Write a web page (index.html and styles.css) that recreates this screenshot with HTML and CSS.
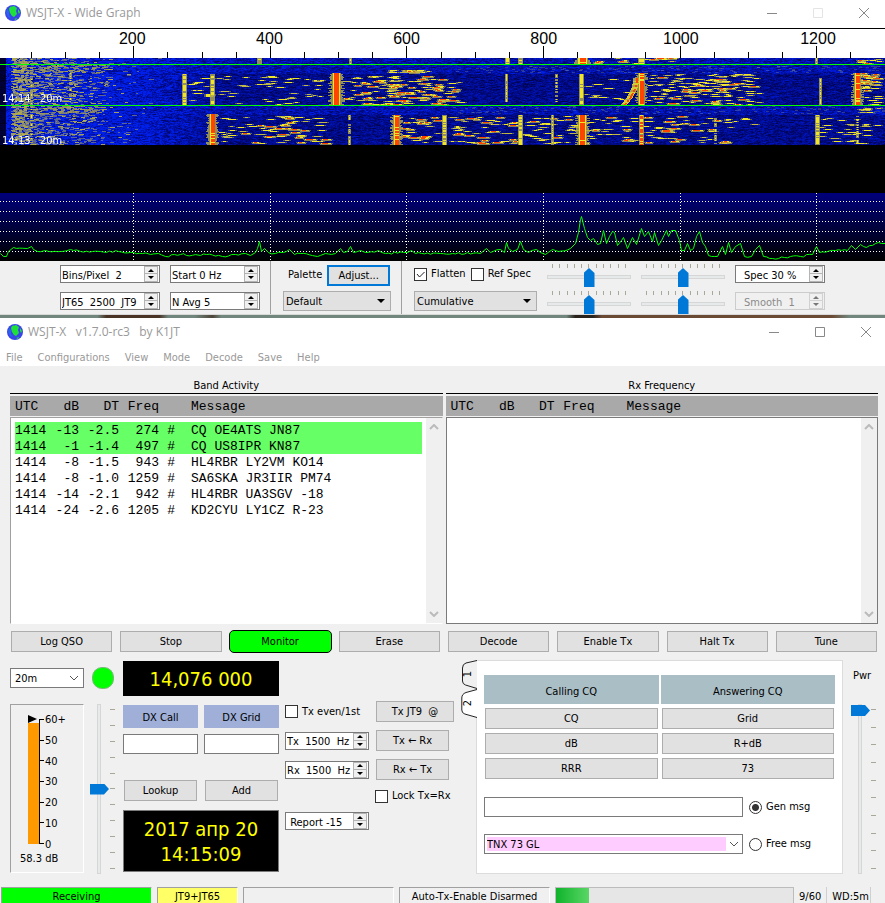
FILE: index.html
```html
<!DOCTYPE html>
<html lang="en">
<head>
  <meta charset="UTF-8">
  <meta name="viewport" content="width=device-width, initial-scale=1.0">
  <title>WSJT-X</title>
  <link rel="stylesheet" href="styles.css">
</head>
<body>

  <section class="wide-graph">
    <header class="titlebar">
      <svg class="globe" viewBox="0 0 16 16"><circle cx="8" cy="8" r="8" fill="#3a44e8"/><path d="M5 2l4-1 3 2-1 3 1 3-3 3-2-1-2-3-1-4zM13 4l2 3-1 2-1-2zM9 14l3-1-1 2z" fill="#1fe03a"/><path d="M2 4l2 2v4l2 3-3-1-2-4z" fill="#2b62f0"/></svg>
      <h1>WSJT-X - Wide Graph</h1>
      <div class="window-buttons">
        <button aria-label="Minimize"><svg viewBox="0 0 16 16"><path d="M3 8.500h10"/></svg></button>
        <button aria-label="Maximize" disabled><svg viewBox="0 0 16 16"><path d="M3.500 3.500h9v9h-9z"/></svg></button>
        <button aria-label="Close"><svg viewBox="0 0 16 16"><path d="M3 3l10 10M13 3L3 13"/></svg></button>
      </div>
    </header>

    <div class="scale">
      <div class="scale-labels">
        <span>200</span><span>400</span><span>600</span><span>800</span><span>1000</span><span>1200</span>
      </div>
      <canvas id="scale" height="12"></canvas>
    </div>

    <div class="waterfall">
      <canvas id="waterfall" height="135"></canvas>
      <span class="stamp stamp-new">14:14 &nbsp;&nbsp;20m</span>
      <span class="stamp stamp-old">14:13 &nbsp;&nbsp;20m</span>
    </div>
    <canvas id="spectrum" height="68"></canvas>

    <div class="graph-controls">
      <div class="group group-spins">
        <span class="spin"><input type="text" aria-label="Bins per pixel" value="Bins/Pixel  2"><button class="up" aria-label="Up"></button><button class="down" aria-label="Down"></button></span>
        <span class="spin"><input type="text" aria-label="Start frequency" value="Start 0 Hz"><button class="up" aria-label="Up"></button><button class="down" aria-label="Down"></button></span>
        <span class="spin"><input type="text" aria-label="JT65 JT9 split" value="JT65  2500  JT9"><button class="up" aria-label="Up"></button><button class="down" aria-label="Down"></button></span>
        <span class="spin"><input type="text" aria-label="Averages" value="N Avg 5"><button class="up" aria-label="Up"></button><button class="down" aria-label="Down"></button></span>
      </div>
      <div class="group group-palette">
        <div class="row palette-row">
          <label for="palette">Palette</label>
          <button class="btn focused">Adjust...</button>
        </div>
        <select id="palette" class="combo flat"><option>Default</option></select>
      </div>
      <div class="group group-view">
        <div class="row">
          <label class="check"><input type="checkbox" checked>Flatten</label>
          <label class="check"><input type="checkbox">Ref Spec</label>
        </div>
        <select class="combo flat" aria-label="Spectrum mode"><option>Cumulative</option></select>
      </div>
      <div class="group group-sliders">
        <div class="hslider"><div class="ticks" data-ticks="11"></div><input type="range" aria-label="Waterfall gain"></div>
        <div class="hslider"><div class="ticks" data-ticks="11"></div><input type="range" aria-label="Spectrum gain"></div>
        <div class="hslider"><div class="ticks" data-ticks="11"></div><input type="range" aria-label="Waterfall zero"></div>
        <div class="hslider"><div class="ticks" data-ticks="11"></div><input type="range" aria-label="Spectrum zero"></div>
      </div>
      <div class="group group-spec">
        <span class="spin inset"><input type="text" aria-label="Spectrum height" value="Spec 30 %"><button class="up" aria-label="Up"></button><button class="down" aria-label="Down"></button></span>
        <span class="spin inset disabled"><input type="text" aria-label="Smoothing" value="Smooth  1" disabled><button class="up" aria-label="Up" disabled></button><button class="down" aria-label="Down" disabled></button></span>
      </div>
    </div>
  </section>

  <div class="desktop-strip"></div>

  <section class="main-window">
    <header class="titlebar">
      <svg class="globe" viewBox="0 0 16 16"><circle cx="8" cy="8" r="8" fill="#3a44e8"/><path d="M5 2l4-1 3 2-1 3 1 3-3 3-2-1-2-3-1-4zM13 4l2 3-1 2-1-2zM9 14l3-1-1 2z" fill="#1fe03a"/><path d="M2 4l2 2v4l2 3-3-1-2-4z" fill="#2b62f0"/></svg>
      <h1>WSJT-X &nbsp; v1.7.0-rc3 &nbsp; by K1JT</h1>
      <div class="window-buttons">
        <button aria-label="Minimize"><svg viewBox="0 0 16 16"><path d="M3 8.500h10"/></svg></button>
        <button aria-label="Maximize"><svg viewBox="0 0 16 16"><path d="M3.500 3.500h9v9h-9z"/></svg></button>
        <button aria-label="Close"><svg viewBox="0 0 16 16"><path d="M3 3l10 10M13 3L3 13"/></svg></button>
      </div>
    </header>
    <nav class="menu">
      <button>File</button><button>Configurations</button><button>View</button><button>Mode</button><button>Decode</button><button>Save</button><button>Help</button>
    </nav>

    <main>
      <div class="panels">
        <div class="panel">
          <h2>Band Activity</h2>
          <table>
            <thead>
              <tr><th>UTC</th><th>dB</th><th>DT</th><th>Freq</th><th></th><th>Message</th></tr>
            </thead>
            <tbody>
              <tr class="cq"><td>1414</td><td>-13</td><td>-2.5</td><td>274</td><td>#</td><td>CQ OE4ATS JN87</td></tr>
              <tr class="cq"><td>1414</td><td>-1</td><td>-1.4</td><td>497</td><td>#</td><td>CQ US8IPR KN87</td></tr>
              <tr><td>1414</td><td>-8</td><td>-1.5</td><td>943</td><td>#</td><td>HL4RBR LY2VM KO14</td></tr>
              <tr><td>1414</td><td>-8</td><td>-1.0</td><td>1259</td><td>#</td><td>SA6SKA JR3IIR PM74</td></tr>
              <tr><td>1414</td><td>-14</td><td>-2.1</td><td>942</td><td>#</td><td>HL4RBR UA3SGV -18</td></tr>
              <tr><td>1414</td><td>-24</td><td>-2.6</td><td>1205</td><td>#</td><td>KD2CYU LY1CZ R-23</td></tr>
            </tbody>
          </table>
          <div class="scrollbar">
            <svg viewBox="0 0 10 6"><path d="M1 5l4-4 4 4"/></svg>
            <svg viewBox="0 0 10 6"><path d="M1 1l4 4 4-4"/></svg>
          </div>
        </div>
        <div class="panel panel-active">
          <h2>Rx Frequency</h2>
          <table>
            <thead>
              <tr><th>UTC</th><th>dB</th><th>DT</th><th>Freq</th><th></th><th>Message</th></tr>
            </thead>
            <tbody></tbody>
          </table>
          <div class="scrollbar">
            <svg viewBox="0 0 10 6"><path d="M1 5l4-4 4 4"/></svg>
            <svg viewBox="0 0 10 6"><path d="M1 1l4 4 4-4"/></svg>
          </div>
        </div>
      </div>

      <div class="actions">
        <button class="btn">Log QSO</button>
        <button class="btn">Stop</button>
        <button class="btn monitor">Monitor</button>
        <button class="btn">Erase</button>
        <button class="btn">Decode</button>
        <button class="btn">Enable Tx</button>
        <button class="btn">Halt Tx</button>
        <button class="btn">Tune</button>
      </div>

      <div class="station">
        <div class="col-band">
          <select class="combo" aria-label="Band"><option>20m</option></select>
          <div class="meter">
            <div class="meter-body">
              <div class="meter-bar"><div class="meter-fill" style="height: 97%"></div></div>
              <div class="meter-ticks ticks" data-ticks="7"></div>
              <div class="meter-labels">
                <span>60+</span><span>50</span><span>40</span><span>30</span><span>20</span><span>10</span><span>0</span>
              </div>
            </div>
            <div class="meter-value">58.3 dB</div>
          </div>
        </div>

        <div class="col-gain">
          <div class="lamp"></div>
          <div class="vslider"><input type="range" aria-label="Input gain" value="50"><div class="ticks" data-ticks="11"></div></div>
        </div>

        <div class="col-dx">
          <div class="readout frequency">14,076 000</div>
          <div class="pair">
            <label class="dx-label" for="dxcall">DX Call</label>
            <label class="dx-label" for="dxgrid">DX Grid</label>
          </div>
          <div class="pair">
            <input type="text" id="dxcall">
            <input type="text" id="dxgrid">
          </div>
          <div class="pair dx-buttons">
            <button class="btn">Lookup</button>
            <button class="btn">Add</button>
          </div>
          <div class="readout clock">2017 апр 20<br>14:15:09</div>
        </div>

        <div class="col-tx">
          <label class="check"><input type="checkbox">Tx even/1st</label>
          <button class="btn">Tx JT9 &nbsp;@</button>
          <span class="spin"><input type="text" aria-label="Tx frequency" value="Tx  1500  Hz"><button class="up" aria-label="Up"></button><button class="down" aria-label="Down"></button></span>
          <button class="btn narrow">Tx ← Rx</button>
          <span class="spin"><input type="text" aria-label="Rx frequency" value="Rx  1500  Hz"><button class="up" aria-label="Up"></button><button class="down" aria-label="Down"></button></span>
          <button class="btn narrow">Rx ← Tx</button>
          <label class="check lock"><input type="checkbox">Lock Tx=Rx</label>
          <span class="spin"><input type="text" aria-label="Report" value=" Report -15"><button class="up" aria-label="Up"></button><button class="down" aria-label="Down"></button></span>
        </div>

        <div class="col-messages">
          <div class="tabs">
            <button><svg viewBox="0 0 16 29"><path d="M16 .5L5 3Q1.500 4 1.500 8v13q0 3 3 4l11.500 3.500"/></svg><span>1</span></button>
            <button class="selected"><svg viewBox="0 0 16 29"><path d="M16 .5L5 3.500Q.8 5 .8 9v12q0 3 3 4L16 28.500"/></svg><span>2</span></button>
          </div>
          <div class="tab-page">
            <div class="message-grid">
              <div class="grid-head">Calling CQ</div><div class="grid-head">Answering CQ</div>
              <button class="btn">CQ</button><button class="btn">Grid</button>
              <button class="btn">dB</button><button class="btn">R+dB</button>
              <button class="btn">RRR</button><button class="btn">73</button>
            </div>
            <div class="message-row">
              <input type="text" aria-label="Generated message">
              <label class="check"><input type="radio" name="msg" checked>Gen msg</label>
            </div>
            <div class="message-row">
              <select class="combo pink" aria-label="Free message"><option>TNX 73 GL</option></select>
              <label class="check"><input type="radio" name="msg">Free msg</label>
            </div>
          </div>
        </div>

        <div class="col-power">
          <label for="pwr">Pwr</label>
          <div class="vslider"><input type="range" id="pwr" value="100"><div class="ticks" data-ticks="10"></div></div>
        </div>
      </div>
    </main>

    <footer class="status">
      <div class="cell receiving">Receiving</div>
      <div class="cell mode">JT9+JT65</div>
      <div class="cell"></div>
      <div class="cell">Auto-Tx-Enable Disarmed</div>
      <div class="progress"><div class="progress-fill" style="width: 14%"></div></div>
      <div class="plain">9/60</div>
      <div class="plain">WD:5m</div>
    </footer>
  </section>

  <script src="script.js"></script>
</body>
</html>
```
FILE: styles.css
```css
* {
  box-sizing: border-box;
}

body {
  margin: 0;
  font-family: "DejaVu Sans Condensed", "Noto Sans", sans-serif;
  font-size: 11px;
  line-height: 14px;
  color: #000;
  background-color: #f0f0f0;
}

button, input, select {
  font: inherit;
  color: inherit;
  margin: 0;
  padding: 0;
  border: none;
  border-radius: 0;
  background: none;
  appearance: none;
  outline: none;
}

canvas {
  display: block;
  width: 100%;
}

/* title bars */
.titlebar {
  display: flex;
  align-items: center;
  height: 28px;
  padding: 0 13px 3px 5px;
  background-color: #fff;
}

.titlebar h1 {
  flex: 1;
  margin: 0 0 0 5px;
  font-family: "Open Sans", sans-serif;
  font-size: 12px;
  font-weight: normal;
  color: #999;
}

.globe {
  width: 16px;
  height: 16px;
}

.window-buttons {
  display: flex;
  gap: 30px;
}

.window-buttons button {
  width: 16px;
  height: 16px;
}

.window-buttons svg {
  display: block;
  fill: none;
  stroke: #888;
}

.window-buttons button:disabled svg {
  stroke: #e4e4e4;
}

/* wide graph */
.scale {
  height: 30px;
  border-top: 1px solid #000;
  background-color: #fff;
}

.scale-labels {
  display: flex;
  height: 17px;
  padding-left: 7.2%;
  font-family: "Liberation Sans", Arial, sans-serif;
  font-size: 16px;
  line-height: 19px;
}

.scale-labels span {
  width: 16.7%;
  flex: none;
  text-align: center;
}

.waterfall {
  position: relative;
  background-color: #000;
}

.stamp {
  position: absolute;
  left: 2px;
  font-size: 11px;
  line-height: 12px;
  color: #fff;
  white-space: pre;
}

.stamp-new {
  top: 35px;
}

.stamp-old {
  top: 77px;
}

.graph-controls {
  display: flex;
  height: 54px;
  border-bottom: 1px solid #d8d8d8;
}

.group {
  display: grid;
  grid-template-rows: 20px 20px;
  row-gap: 7px;
  padding: 3px 10px 0;
  align-items: center;
}

.group-spins {
  grid-template-columns: 100px 90px;
  column-gap: 10px;
  padding-left: 60px;
  border-right: 1px solid #a0a0a0;
}

.group-palette {
  width: 131px;
  padding-left: 12px;
  border-right: 1px solid #a0a0a0;
}

.group-view {
  width: 145px;
  padding: 3px 10px 0 12px;
}

.group-sliders {
  grid-template-columns: 84px 84px;
  column-gap: 10px;
  padding: 3px 0 0;
  align-items: start;
}

.group-spec {
  grid-template-columns: 90px;
}

.row {
  display: flex;
  align-items: center;
  gap: 5px;
}

.palette-row {
  padding: 2px 1px 0 5px;
  justify-content: space-between;
}

.palette-row .btn {
  width: 63px;
}

/* basic controls */
.btn {
  height: 21px;
  padding-top: 1px;
  line-height: 18px;
  text-align: center;
  white-space: nowrap;
  background-color: #e1e1e1;
  border: 1px solid #adadad;
}

.btn.focused {
  padding-top: 0;
  border: 2px solid #0078d7;
}

input[type="text"] {
  min-width: 0;
  height: 20px;
  border: 1px solid #7a7a7a;
  background-color: #fff;
}

.spin {
  display: grid;
  grid-template-columns: 1fr 14px;
  grid-template-rows: 8px 8px;
  height: 18px;
  padding: 0 1px;
  border: 1px solid #7a7a7a;
  background-color: #fff;
}

.spin input[type="text"] {
  grid-row: 1 / 3;
  height: 16px;
  padding-top: 2px;
  border: none;
  white-space: pre;
}

.spin.inset input {
  padding-left: 7px;
}

.spin button {
  border: 1px solid #b4b4b4;
  background: #f0f0f0 url("data:image/svg+xml,%3Csvg xmlns='http://www.w3.org/2000/svg' width='6' height='3'%3E%3Cpath d='M0 3l3-3 3 3z'/%3E%3C/svg%3E") center no-repeat;
}

.spin .down {
  border-top: none;
  background-image: url("data:image/svg+xml,%3Csvg xmlns='http://www.w3.org/2000/svg' width='6' height='3'%3E%3Cpath d='M0 0l3 3 3-3z'/%3E%3C/svg%3E");
}

.spin.disabled {
  border-color: #ccc;
  background-color: #f0f0f0;
  color: #8a8a8a;
}

.spin.disabled input {
  background-color: #f0f0f0;
}

.spin.disabled button {
  opacity: 0.5;
}

.combo {
  width: 100%;
  height: 20px;
  padding: 1px 4px 0;
  border: 1px solid #7a7a7a;
  background: #fff url("data:image/svg+xml,%3Csvg xmlns='http://www.w3.org/2000/svg' width='10' height='6'%3E%3Cpath d='M1 1l4 4 4-4' fill='none' stroke='%23555'/%3E%3C/svg%3E") right 4px center no-repeat;
}

.combo.flat {
  padding: 1px 2px 0;
  border-color: #adadad;
  background: #e1e1e1 url("data:image/svg+xml,%3Csvg xmlns='http://www.w3.org/2000/svg' width='8' height='4'%3E%3Cpath d='M0 0l4 4 4-4z'/%3E%3C/svg%3E") right 5px center no-repeat;
}

.check {
  display: flex;
  align-items: center;
  gap: 4px;
  line-height: 16px;
  white-space: nowrap;
}

.check input {
  flex: none;
  width: 13px;
  height: 13px;
  border: 1px solid #333;
  background-color: #fff;
}

.check input[type="checkbox"]:checked {
  background-image: url("data:image/svg+xml,%3Csvg xmlns='http://www.w3.org/2000/svg' width='11' height='11'%3E%3Cpath d='M2 5l2.500 3L9.500 3' fill='none' stroke='%23222'/%3E%3C/svg%3E");
}

.check input[type="radio"] {
  border-radius: 50%;
}

.check input[type="radio"]:checked {
  background-image: radial-gradient(circle, #333 0 3px, #fff 4px);
}

/* sliders */
.ticks {
  display: flex;
  justify-content: space-between;
}

.hslider .ticks {
  height: 4px;
  padding: 0 5px;
}

.hslider .ticks i {
  width: 1px;
  background-color: #a9a797;
}

.hslider input {
  display: block;
  width: 100%;
  height: 18px;
}

input[type="range"]::-webkit-slider-runnable-track {
  height: 4px;
  border: 1px solid #d6d6d6;
  background-color: #e7eaea;
}

input[type="range"]::-webkit-slider-thumb {
  appearance: none;
  width: 11px;
  height: 19px;
  margin-top: -8px;
  background-color: #0078d7;
  clip-path: polygon(50% 0, 100% 5px, 100% 100%, 0 100%, 0 5px);
}

.vslider {
  display: flex;
  height: 170px;
}

.vslider input {
  flex: none;
  width: 18px;
  height: 170px;
  writing-mode: vertical-lr;
  direction: rtl;
}

.vslider input::-webkit-slider-runnable-track {
  width: 4px;
  height: 100%;
}

.vslider input::-webkit-slider-thumb {
  width: 19px;
  height: 11px;
  margin: 0 0 0 -8px;
  clip-path: polygon(0 0, 14px 0, 100% 50%, 14px 100%, 0 100%);
}

.vslider .ticks {
  flex-direction: column;
  padding: 5px 0 5px 2px;
}

.vslider .ticks i {
  width: 5px;
  height: 1px;
  background-color: #a9a797;
}

.desktop-strip {
  height: 3px;
  background: linear-gradient(to right, #71877e 0 11%, #4a3426 12% 18%, #71877e 19% 22%, #4d4438 24%, #71877e 25% 64%, #2a231c 65% 67%, #6b4a34 68% 94%, #71877e 96%);
}

/* main window */
.main-window .titlebar {
  height: 29px;
  padding: 0 11px 1px 7px;
}

.menu {
  display: flex;
  gap: 15px;
  height: 19px;
  padding: 3px 0 0 6px;
  background-color: #fff;
  color: #999;
}

main {
  padding: 12px 7px 0 10px;
}

.panels {
  display: grid;
  grid-template-columns: 1fr 1fr;
  gap: 3px;
}

.panel {
  position: relative;
}

.panel h2 {
  margin: 0;
  padding-top: 1px;
  border-bottom: 1px solid #000;
  font-size: 11px;
  font-weight: normal;
  text-align: center;
}

.panel table {
  display: block;
  margin-top: 2px;
  font-family: "Liberation Mono", "Courier New", monospace;
  font-size: 13px;
  line-height: 16px;
}

.panel thead {
  display: block;
  height: 20px;
  padding: 2px 5px;
  background-color: #a9a9a9;
}

.panel tbody {
  display: block;
  min-height: 207px;
  margin-top: 1px;
  padding: 4px 20px 4px 4px;
  background-color: #fff;
  border: 1px solid #a0a0a0;
  border-right-color: #f0f0f0;
  border-bottom-color: #fff;
}

.panel-active tbody {
  border-color: #7a7a7a;
}

.panel tr {
  display: grid;
  grid-template-columns: 32px 32px 40px 40px 16px 1fr;
  height: 16px;
}

.panel th,
.panel td {
  padding: 0;
  font-weight: normal;
  line-height: 18px;
  text-align: right;
}

.panel th:first-child,
.panel td:first-child {
  text-align: left;
}

.panel th:last-child,
.panel td:last-child {
  padding-left: 16px;
  text-align: left;
}

.cq {
  background-color: #66ff66;
}

.scrollbar {
  position: absolute;
  right: 1px;
  bottom: 1px;
  display: flex;
  flex-direction: column;
  justify-content: space-between;
  align-items: center;
  width: 16px;
  height: 205px;
  padding: 6px 0;
  background-color: #f0f0f0;
}

.scrollbar svg {
  width: 10px;
  height: 6px;
  fill: none;
  stroke: #bbb;
  stroke-width: 2;
}

.actions {
  display: grid;
  grid-template-columns: repeat(8, 1fr);
  gap: 8px;
  align-items: center;
  padding: 6px 1px;
}

.btn.monitor {
  height: 23px;
  margin: 0 -1px;
  border-color: #000;
  border-radius: 5px;
  background-color: #00ff00;
}

.station {
  display: grid;
  grid-template-columns: 74px 25px 156px 169px 1fr 27px;
  column-gap: 7px;
  padding-top: 1px;
}

.col-band,
.col-gain,
.col-power {
  display: flex;
  flex-direction: column;
  gap: 16px;
  padding-top: 8px;
}

.meter {
  height: 169px;
  padding: 8px 4px 0 17px;
  border: 1px solid #a0a0a0;
  border-right-color: #fff;
  border-bottom-color: #fff;
}

.meter-body {
  display: flex;
}

.meter-bar {
  position: relative;
  display: flex;
  align-items: flex-end;
  width: 12px;
  height: 125px;
  margin-top: 6px;
  border-right: 1px solid #000;
}

.meter-bar::before {
  content: "";
  position: absolute;
  top: -4px;
  left: 0;
  border-left: 9px solid #000;
  border-top: 4px solid transparent;
  border-bottom: 4px solid transparent;
}

.meter-fill {
  width: 11px;
  background-color: #ff9900;
}

.meter-ticks {
  flex-direction: column;
  height: 125px;
  margin-top: 6px;
}

.meter-ticks i {
  width: 4px;
  height: 1px;
  background-color: #000;
}

.meter-labels {
  display: flex;
  flex-direction: column;
  justify-content: space-between;
  height: 139px;
  padding-left: 1px;
}

.meter-value {
  margin-left: -8px;
}

.lamp {
  width: 22px;
  height: 22px;
  margin: -1px 0 -1px 1px;
  border: 1px solid #7cb87c;
  border-radius: 10px;
  background-color: #00ff00;
}

.col-gain .vslider {
  margin-left: -1px;
}

.col-dx {
  display: flex;
  flex-direction: column;
}

.readout {
  color: #ffff00;
  background-color: #000;
  text-align: center;
}

.frequency {
  height: 35px;
  margin: 1px 0 9px;
  font-size: 20px;
  line-height: 37px;
}

.clock {
  height: 62px;
  padding-top: 6px;
  border: 1px solid #7a7a7a;
  font-size: 20px;
  line-height: 25px;
}

.pair {
  display: grid;
  grid-template-columns: 1fr 1fr;
  gap: 6px;
  margin-bottom: 6px;
}

.dx-label {
  height: 23px;
  line-height: 25px;
  text-align: center;
  background-color: #9fafd7;
}

.dx-buttons {
  gap: 8px;
  margin: 20px 0 9px;
  padding: 0 1px;
}

.col-tx {
  display: grid;
  grid-template-columns: 84px 78px;
  grid-template-rows: 21px 21px 21px 16px 18px;
  gap: 8px 7px;
  align-items: center;
  align-content: start;
  margin: 41px 0 0 -1px;
}

.btn.narrow {
  width: 73px;
}

.lock {
  grid-column: 2;
  margin-left: -1px;
}

.col-messages {
  display: flex;
  margin: 0 1px 0 -1px;
}

.tabs {
  flex: none;
  width: 15px;
}

.tabs button {
  position: relative;
  display: block;
  width: 16px;
  height: 29px;
}

.tabs svg {
  position: absolute;
  left: 0;
  top: 0;
  width: 16px;
  height: 29px;
  fill: #f0f0f0;
  stroke: #222;
}

.tabs .selected {
  z-index: 1;
}

.tabs .selected svg {
  fill: #fff;
}

.tabs span {
  position: relative;
  display: block;
  writing-mode: vertical-rl;
  transform: rotate(180deg);
  text-align: center;
}

.tab-page {
  flex: 1;
  min-width: 0;
  padding: 14px 7px 0;
  border: 1px solid #dcdcdc;
  background-color: #fff;
}

.message-grid {
  display: grid;
  grid-template-columns: 1fr 1fr;
  gap: 4px 2px;
  margin-bottom: 18px;
}

.message-grid .btn {
  margin: 0 1px;
}

.grid-head {
  height: 29px;
  line-height: 33px;
  text-align: center;
  background-color: #aabec6;
}

.message-row {
  display: grid;
  grid-template-columns: 1fr 86px;
  gap: 6px;
  margin-bottom: 17px;
}

.combo.pink {
  padding: 1px 2px 0;
  background-image: url("data:image/svg+xml,%3Csvg xmlns='http://www.w3.org/2000/svg' width='10' height='6'%3E%3Cpath d='M1 1l4 4 4-4' fill='none' stroke='%23555'/%3E%3C/svg%3E"), linear-gradient(to left, #fff 14px, #ffccff 14px);
  background-position: right 3px center, 2px 2px;
  background-size: auto, calc(100% - 4px) calc(100% - 4px);
  background-repeat: no-repeat;
}

.col-power {
  gap: 22px;
}

.col-power label {
  padding: 0 0 0 2px;
  line-height: 16px;
  height: 14px;
}

/* status bar */
.status {
  display: flex;
  gap: 5px;
  height: 16px;
  margin-top: 13px;
  padding-left: 1px;
  overflow: hidden;
}

.cell {
  position: relative;
  width: 151px;
  height: 20px;
  border: 1px solid #a0a0a0;
  border-right-color: #fff;
  line-height: 17px;
  text-align: center;
}

.receiving {
  background-color: #00ff00;
}

.mode {
  width: 81px;
  background-color: #ffff66;
}

.progress {
  flex: 1;
  height: 20px;
  border: 1px solid #bcbcbc;
  background-color: #e6e6e6;
}

.progress-fill {
  height: 100%;
  background: linear-gradient(to right, #0fb32b, #5ad766);
}

.plain {
  padding-right: 5px;
  border-right: 1px solid #d0d0d0;
  line-height: 20px;
}

.plain:last-child {
  margin-right: 14px;
  padding-right: 1px;
}
```
FILE: script.js
```js
// frequency (Hz) to a horizontal position, one marker every 50 Hz
const PX_PER_HZ = 0.683;
const OFFSET = -3.4;

function freqToX(freq) {
  return Math.round(freq * PX_PER_HZ + OFFSET);
}

let seed = 1414;
function random() {
  seed = (seed * 1664525 + 1013904223) % 4294967296;
  return seed / 4294967296;
}

function setup(id) {
  const canvas = document.getElementById(id);
  canvas.width = canvas.clientWidth;
  canvas.style.height = canvas.height + 'px';
  return canvas;
}

function drawScale() {
  const canvas = setup('scale');
  const ctx = canvas.getContext('2d');
  ctx.fillStyle = '#000';
  for (let f = 50; freqToX(f) < canvas.width; f += 50) {
    const size = f % 200 === 0 ? 12 : 6;
    ctx.fillRect(freqToX(f), 12 - size, 1, size);
  }
}

// x, top, bottom, half width, strength
const carriers = [
  [259, 0, 6, 2, 1], [350, 0, 6, 1, 1], [507, 0, 6, 2, 1], [520, 0, 6, 2, 1], [582, 0, 6, 5, 4], [641, 0, 6, 3, 2], [816, 0, 6, 1, 1],
  [184, 16, 47, 2, 2], [212, 16, 48, 2, 1.2], [336, 15, 47, 4, 5], [506, 16, 44, 1, 1], [556, 16, 44, 1, 0.5], [581, 16, 48, 2, 2],
  [641, 15, 48, 3, 4], [820, 20, 48, 1, 1.2], [857, 15, 48, 3, 4], [70, 15, 45, 1, 0.5], [31, 0, 87, 1, 0.5],
  [212, 56, 87, 3, 4], [349, 57, 87, 1, 0.7], [396, 57, 87, 3, 4], [444, 57, 87, 2, 2], [520, 57, 87, 2, 2], [552, 57, 87, 1, 1],
  [582, 57, 87, 4, 4], [641, 57, 87, 2, 3], [715, 57, 87, 1, 0.5], [817, 57, 87, 2, 1.5], [857, 58, 87, 1, 0.8]
];

// left, right, top, bottom, dash count, share of red
const smears = [
  [587, 680, 0, 6, 16, 0.5], [850, 885, 0, 6, 8, 0.1],
  [188, 325, 18, 47, 60, 0], [342, 405, 18, 47, 55, 0.3], [385, 450, 18, 47, 60, 0.45], [425, 468, 24, 47, 26, 0.5],
  [398, 424, 12, 15, 9, 0.7], [388, 440, 12, 15, 8, 0], [585, 635, 18, 46, 14, 0], [645, 763, 16, 47, 125, 0.15],
  [680, 730, 18, 35, 30, 0.15], [859, 885, 15, 34, 30, 0.3], [859, 885, 38, 56, 15, 0],
  [217, 335, 58, 86, 72, 0.3], [400, 445, 58, 86, 28, 0.4], [446, 520, 58, 86, 48, 0.35],
  [522, 580, 58, 86, 34, 0.1], [565, 640, 58, 86, 42, 0.2], [643, 690, 58, 86, 32, 0.3],
  [690, 765, 58, 86, 24, 0.35], [818, 885, 60, 87, 30, 0]
];

function drawDash(ctx, x, y, w, hot) {
  ctx.fillStyle = 'rgba(150,150,80,0.6)';
  ctx.fillRect(x - 2, y, w + 4, 1);
  ctx.fillStyle = random() < 0.6 ? '#efe52c' : '#c0b848';
  ctx.fillRect(x, y, w, 1);
  if (hot) {
    ctx.fillStyle = 'rgba(190,180,70,0.7)';
    ctx.fillRect(x - 1, y + 1, w + 2, 1);
    ctx.fillStyle = '#ff4400';
    ctx.fillRect(x + 1, y, Math.max(3, w - 4), 1);
  }
}

function drawWaterfall() {
  const canvas = setup('waterfall');
  const ctx = canvas.getContext('2d');
  const width = canvas.width;
  ctx.fillStyle = '#000';
  ctx.fillRect(0, 0, width, 135);

  // blue noise floor, darker in the middle of the active periods
  for (let y = 0; y < 87; y++) {
    const active = (y > 15 && y < 47) || y > 56;
    let level = 0.5;
    for (let x = 0; x < width; x++) {
      level = level * 0.5 + random() * 0.5;
      const floor = active ? 0.68 : 0.84;
      const base = floor + (1.08 - floor) * Math.max(0, Math.min(1, (230 - x) / 110));
      const v = Math.max(0, Math.min(1, base * (0.35 + level)));
      ctx.fillStyle = x < 6 ? `rgb(0,0,${Math.round(v * 60)})` : `rgb(0,${Math.round(v * v * 32)},${Math.round(v * 235)})`;
      ctx.fillRect(x, y, 1, 1);
    }
  }

  // hum on the low end, fading out to the right
  for (let i = 0; i < 1300; i++) {
    const x = 11 + (random() + random()) * random() * 78;
    const y = Math.floor(random() * 87);
    ctx.fillStyle = random() < 0.2 ? 'rgba(190,182,70,0.85)' : 'rgba(150,150,105,0.6)';
    ctx.fillRect(Math.floor(x), y, 2 + Math.floor(random() * 4), 1);
  }
  for (let i = 0; i < 230; i++) {
    const y = Math.floor(random() * 87);
    ctx.fillStyle = 'rgba(180,172,75,0.75)';
    ctx.fillRect(11 + Math.floor(random() * 16), y, 3, 1);
  }
  for (let i = 0; i < 130; i++) {
    const y = random() < 0.5 ? 7 + random() * 8 : 48 + random() * 8;
    ctx.fillStyle = 'rgba(160,155,85,0.8)';
    ctx.fillRect(Math.floor(40 + random() * 65), Math.floor(y), 4, 1);
  }

  // faint speckle between the periods
  for (let i = 0; i < 260; i++) {
    const y = random() < 0.5 ? 8 + random() * 7 : 48 + random() * 8;
    ctx.fillStyle = 'rgba(110,125,150,0.4)';
    ctx.fillRect(Math.floor(450 + random() * 435), Math.floor(y), 3, 1);
  }

  smears.forEach(([left, right, top, bottom, count, red]) => {
    for (let i = 0; i < count; i++) {
      const hot = random() < red;
      const w = (hot ? 6 : 3) + Math.floor(random() * 6);
      const x = Math.floor(left + random() * (right - left - w));
      const y = Math.floor(top + random() * (bottom - top));
      drawDash(ctx, x, y, w, hot);
    }
  });

  carriers.forEach(([x, top, bottom, half, strength]) => {
    for (let y = top; y < bottom; y++) {
      if (strength < 1 && random() < 0.4) continue;
      const spread = strength > 3 ? Math.floor(random() * strength) : 0;
      ctx.fillStyle = 'rgba(170,165,80,0.85)';
      ctx.fillRect(x - half - spread, y, (half + spread) * 2 + 1, 1);
      if (random() < 0.3 + strength * 0.2) {
        ctx.fillStyle = '#f0e428';
        ctx.fillRect(x - half + 1, y, Math.max(1, half * 2 - 1), 1);
      }
      if (strength > 2 && random() < strength / 5) {
        ctx.fillStyle = '#ff4400';
        ctx.fillRect(x - Math.floor(half / 2), y, half + 1, 1);
      }
    }
  });

  // drifting signal joining the carrier near 943 Hz
  for (let y = 20; y < 48; y++) {
    const x = 637 - Math.round(Math.pow((y - 20) / 28, 2) * 14);
    ctx.fillStyle = random() < 0.6 ? '#d8cc30' : '#a8a050';
    ctx.fillRect(x - 4, y, 6, 1);
    ctx.fillStyle = '#ff4400';
    if (random() < 0.6) ctx.fillRect(x - 1, y, 2, 1);
  }

  ctx.fillStyle = '#00ff00';
  ctx.fillRect(0, 6, width, 1);
  ctx.fillRect(0, 47, width, 1);
}

const trace = [
  [0, 60], [3, 63], [6, 63], [8, 58], [13, 54], [27, 55], [31, 53], [33, 56], [37, 58], [45, 57], [60, 58], [70, 56], [80, 58],
  [100, 58], [118, 58], [133, 59], [150, 61], [158, 60], [165, 63], [180, 61], [200, 62], [206, 61], [222, 63], [235, 61],
  [245, 60], [250, 62], [255, 59], [257, 55], [259, 48], [261, 58], [264, 55], [268, 59], [275, 60], [283, 59], [289, 56],
  [294, 61], [300, 60], [317, 63], [325, 60], [335, 60], [340, 55], [343, 59], [347, 58], [350, 53], [353, 59], [360, 57],
  [365, 59], [378, 57], [385, 60], [407, 59], [411, 57], [415, 60], [440, 60], [480, 60], [486, 55], [490, 59], [500, 56],
  [504, 59], [506, 49], [508, 55], [512, 58], [517, 56], [520, 48], [523, 56], [528, 59], [536, 56], [540, 59], [545, 61],
  [552, 56], [558, 58], [570, 55], [575, 50], [578, 39], [580, 26], [581, 23], [584, 35], [587, 44], [590, 47], [593, 45],
  [597, 51], [600, 50], [603, 37], [606, 50], [609, 43], [612, 38], [614, 39], [617, 52], [621, 47], [623, 44], [627, 55],
  [632, 44], [636, 51], [641, 35], [644, 43], [648, 38], [652, 48], [654, 39], [658, 52], [661, 47], [666, 37], [668, 43],
  [671, 37], [675, 37], [679, 47], [681, 57], [684, 57], [687, 50], [690, 57], [693, 55], [696, 43], [699, 38], [702, 49],
  [705, 53], [708, 62], [717, 63], [722, 53], [725, 61], [728, 49], [731, 59], [735, 53], [740, 50], [744, 63], [751, 63],
  [755, 56], [759, 52], [763, 63], [772, 65], [790, 63], [800, 63], [812, 61], [816, 53], [819, 59], [835, 57], [847, 57],
  [851, 52], [855, 56], [860, 51], [866, 54], [878, 49], [885, 50]
];

function drawSpectrum() {
  const canvas = setup('spectrum');
  const ctx = canvas.getContext('2d');
  const fade = ctx.createLinearGradient(0, 0, 0, 68);
  fade.addColorStop(0, '#00007c');
  fade.addColorStop(1, '#000000');
  ctx.fillStyle = fade;
  ctx.fillRect(0, 0, canvas.width, 68);

  ctx.fillStyle = '#fff';
  for (let y = 8; y < 68; y += 10) {
    for (let x = 0; x < canvas.width; x += 3) ctx.fillRect(x, y, 1, 1);
  }
  for (let f = 200; freqToX(f) < canvas.width; f += 200) {
    for (let y = 0; y < 68; y += 3) ctx.fillRect(freqToX(f), y, 1, 1);
  }

  ctx.strokeStyle = '#00ff00';
  ctx.beginPath();
  trace.forEach(([x, y], i) => {
    // small ripple on the long flat runs
    if (i > 0) {
      const [px, py] = trace[i - 1];
      for (let s = px + 3; s < x - 2; s += 3) {
        ctx.lineTo(s + 0.5, py + (y - py) * (s - px) / (x - px) + random() * 2 - 0.5);
      }
    }
    ctx.lineTo(x + 0.5, y + 0.5);
  });
  ctx.stroke();
}

document.querySelectorAll('[data-ticks]').forEach((box) => {
  for (let i = 0; i < Number(box.dataset.ticks); i++) {
    box.appendChild(document.createElement('i'));
  }
});

drawScale();
drawWaterfall();
drawSpectrum();
```
